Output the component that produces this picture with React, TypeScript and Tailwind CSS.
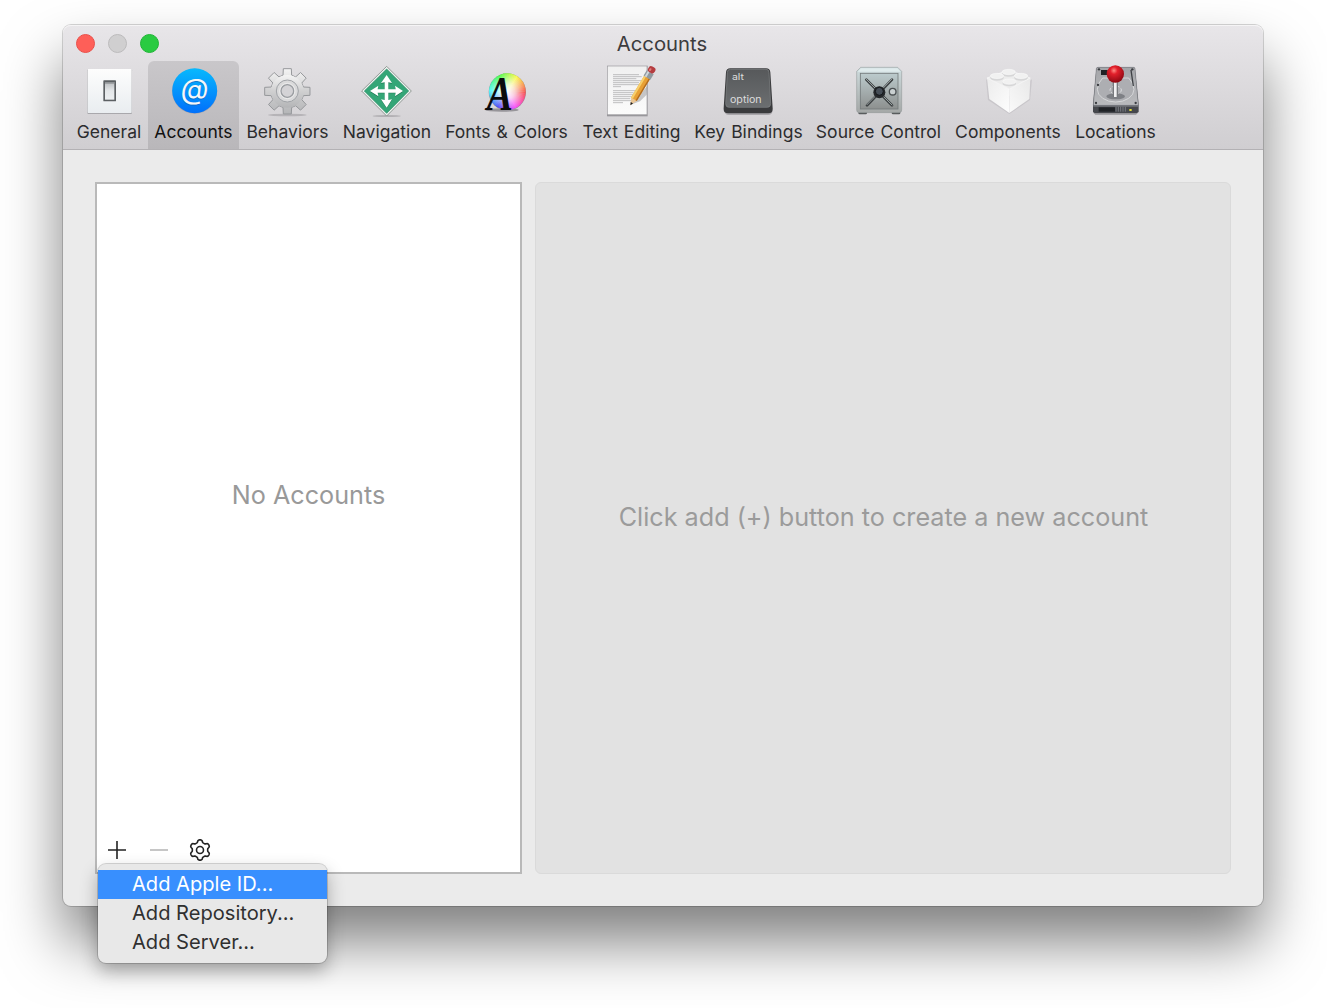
import React from "react";

function polar(cx: number, cy: number, r: number, deg: number) {
  const a = (deg * Math.PI) / 180;
  return `${(cx + r * Math.cos(a)).toFixed(2)} ${(cy + r * Math.sin(a)).toFixed(2)}`;
}

function cog(cx: number, cy: number, teeth: number, rOut: number, rIn: number, tip: number, base: number) {
  const pts: string[] = [];
  for (let i = 0; i < teeth; i++) {
    const c = -90 + (360 / teeth) * i;
    pts.push(polar(cx, cy, rIn, c - base), polar(cx, cy, rOut, c - tip), polar(cx, cy, rOut, c + tip), polar(cx, cy, rIn, c + base));
  }
  return "M" + pts.join("L") + "Z";
}

function softCog(cx: number, cy: number, teeth: number, mid: number, swing: number) {
  const pts: string[] = [];
  for (let d = 0; d < 360; d += 3) {
    const wave = Math.cos(((d + 90) * teeth * Math.PI) / 180);
    pts.push(polar(cx, cy, mid + swing * Math.tanh(1.8 * wave), d));
  }
  return "M" + pts.join("L") + "Z";
}

const ICON = "h-14 w-14 shrink-0 overflow-visible";

function GeneralIcon() {
  return (
    <svg viewBox="75 138 168 168" className={ICON}>
      <defs>
        <linearGradient id="plate" x1="0" y1="0" x2="0" y2="1">
          <stop offset="0" stopColor="#fdfdfd" />
          <stop offset="1" stopColor="#e9edf0" />
        </linearGradient>
        <linearGradient id="rocker" x1="0" y1="0" x2="0" y2="1">
          <stop offset="0" stopColor="#b9bcbf" />
          <stop offset=".5" stopColor="#e4e7e9" />
          <stop offset="1" stopColor="#eceff1" />
        </linearGradient>
      </defs>
      <rect x="94" y="160" width="134" height="134" rx="3" fill="#a9a8ac" />
      <rect x="95" y="159" width="132" height="132" rx="2" fill="url(#plate)" />
      <rect x="142" y="193" width="38" height="63" rx="2" fill="#5c6063" />
      <rect x="147" y="198" width="28" height="53" fill="url(#rocker)" />
      <rect x="147" y="198" width="28" height="5" fill="#8f9396" />
    </svg>
  );
}

function AccountsIcon() {
  return (
    <svg viewBox="330 138 168 168" className={ICON}>
      <defs>
        <linearGradient id="atBlue" x1="0" y1="0" x2="0" y2="1">
          <stop offset="0" stopColor="#08b9fd" />
          <stop offset="1" stopColor="#0070fb" />
        </linearGradient>
      </defs>
      <circle cx="416" cy="226" r="67.5" fill="#8e8c92" opacity=".5" />
      <circle cx="416" cy="224" r="67.5" fill="url(#atBlue)" />
      <g transform="translate(416 249) skewX(-7)" textAnchor="middle" fontFamily="Inter, sans-serif" fontSize="86">
        <text x="-3" y="2" fill="#1b5fae" opacity=".6">@</text>
        <text x="-3" y="0" fill="#f7f7f7">@</text>
      </g>
    </svg>
  );
}

function BehaviorsIcon() {
  return (
    <svg viewBox="60 18 168 168" className={ICON}>
      <defs>
        <linearGradient id="steel" x1="0" y1="0" x2="0" y2="1">
          <stop offset="0" stopColor="#f4f4f4" />
          <stop offset=".5" stopColor="#cfcfd0" />
          <stop offset="1" stopColor="#b4b5b7" />
        </linearGradient>
      </defs>
      <ellipse cx="142" cy="177" rx="58" ry="4" fill="#8d8b90" opacity=".45" />
      <path d={cog(142, 106, 8, 69, 50, 10, 15)} fill="url(#steel)" stroke="#96989b" strokeWidth="3" strokeLinejoin="round" />
      <circle cx="142" cy="106" r="49" fill="url(#steel)" />
      <circle cx="142" cy="105" r="33" fill="#dadadb" stroke="#a0a3a7" strokeWidth="3" />
      <circle cx="142" cy="105" r="19" fill="#d4d3d6" stroke="#9a9da1" strokeWidth="4" />
      <circle cx="142" cy="105" r="23" fill="none" stroke="#eeeeee" strokeWidth="2.5" />
    </svg>
  );
}

function NavigationIcon() {
  const arrow = "M440 57L456 81L445 79V100L467 100L465 89L489 105L465 121L467 110L445 110V132L456 130L440 155L423 130L434 132V110L413 110L415 121L390 105L415 89L413 100L434 100V79L423 81Z";
  return (
    <svg viewBox="357 18 168 168" className={ICON}>
      <ellipse cx="440" cy="180" rx="42" ry="3" fill="#8d8b90" opacity=".5" />
      <path d="M440 31L514 105L440 180L365 105Z" fill="#eef2f0" stroke="#7f8883" strokeWidth="2.5" strokeLinejoin="round" />
      <path d="M440 39L506 105L440 172L373 105Z" fill="#34a677" stroke="#2b8a64" strokeWidth="2" strokeLinejoin="round" />
      <path d={arrow} transform="translate(0 2)" fill="#1d7350" />
      <path d={arrow} fill="#fff" />
    </svg>
  );
}

function FontsIcon() {
  return (
    <svg viewBox="117 18 168 168" className={ICON}>
      <defs>
        <radialGradient id="hueFade">
          <stop offset="0" stopColor="#fff" />
          <stop offset=".4" stopColor="#fff" stopOpacity=".75" />
          <stop offset="1" stopColor="#fff" stopOpacity=".12" />
        </radialGradient>
        <clipPath id="wheelClip">
          <circle cx="202" cy="107" r="55" />
        </clipPath>
      </defs>
      <ellipse cx="186" cy="162" rx="50" ry="5" fill="#55535a" opacity=".5" />
      <circle cx="202" cy="108" r="56" fill="#9c9aa0" />
      <g clipPath="url(#wheelClip)">
        {Array.from({ length: 60 }, (_, i) => (
          <path
            key={i}
            d={`M202 107L${polar(202, 107, 62, i * 6 - 0.6)}L${polar(202, 107, 62, i * 6 + 6.6)}Z`}
            fill={`hsl(${(360 - i * 6) % 360} 95% 58%)`}
          />
        ))}
        <circle cx="202" cy="107" r="56" fill="url(#hueFade)" />
      </g>
      <text transform="translate(179 163) scale(.82 1)" textAnchor="middle" fontFamily="'Liberation Serif', serif" fontStyle="italic" fontWeight="700" fontSize="143" fill="#0b0b0d">A</text>
    </svg>
  );
}

function TextEditingIcon() {
  return (
    <svg viewBox="492 18 168 168" className={ICON}>
      <defs>
        <linearGradient id="paper" x1="0" y1="0" x2="0" y2="1">
          <stop offset="0" stopColor="#f0f0f0" />
          <stop offset="1" stopColor="#fbfbfb" />
        </linearGradient>
      </defs>
      <rect x="501" y="29" width="122" height="152" fill="#98979b" />
      <rect x="503" y="31" width="117" height="144" fill="url(#paper)" />
      <path d="M519 56h78M519 62h86M519 68h70M519 74h84M519 80h78M519 86h80M519 92h24M519 104h72M519 110h62M519 116h66M519 122h56M519 128h52M519 134h54M519 140h30" stroke="#b3b3b4" strokeWidth="2.5" />
      <path d="M572 146L622 90L620 116L600 136Z" fill="#8a8a8c" opacity=".45" />
      <g transform="translate(571 148) rotate(-59)">
        <path d="M0 0L22 -10V10Z" fill="#e9c595" />
        <path d="M0 0L9 -4V4Z" fill="#1c1c1e" />
        <rect x="21" y="-10" width="78" height="20" fill="#e8a034" />
        <rect x="21" y="-10" width="78" height="6" fill="#f6cf6c" />
        <rect x="21" y="6" width="78" height="4" fill="#b06b20" />
        <rect x="97" y="-12" width="19" height="24" fill="#8f999f" />
        <rect x="97" y="-8" width="19" height="6" fill="#cfd6da" />
        <rect x="115" y="-11" width="19" height="22" rx="8" fill="#b53d40" />
        <rect x="118" y="-7" width="9" height="6" rx="3" fill="#df7f7e" />
      </g>
    </svg>
  );
}

function KeyIcon() {
  return (
    <svg viewBox="98 17 168 168" className={ICON}>
      <defs>
        <linearGradient id="keycap" x1="0" y1="0" x2="0" y2="1">
          <stop offset="0" stopColor="#57595b" />
          <stop offset="1" stopColor="#6b6e70" />
        </linearGradient>
      </defs>
      <path d="M109 164Q109 176 122 176H238Q252 176 252 164Z" fill="#8b898e" opacity=".6" />
      <path d="M113 48Q114 36 126 36H233Q245 36 246 48L253 156Q254 171 240 171H119Q105 171 106 156Z" fill="#3a3b3d" />
      <path d="M117 48Q117 39 126 39H233Q242 39 242 48L247 142Q247 153 237 153H122Q112 153 112 142Z" fill="url(#keycap)" stroke="#808385" strokeWidth="2" />
      <text x="131" y="70" textLength="36" lengthAdjust="spacingAndGlyphs" fontFamily="Inter, sans-serif" fontSize="27" fill="#dcdcdc">alt</text>
      <text x="125" y="140" textLength="95" lengthAdjust="spacingAndGlyphs" fontFamily="Inter, sans-serif" fontSize="28" fill="#dcdcdc">option</text>
    </svg>
  );
}

function SafeIcon() {
  return (
    <svg viewBox="489 18 168 168" className={ICON}>
      <defs>
        <linearGradient id="safe" x1="0" y1="0" x2="0" y2="1">
          <stop offset="0" stopColor="#cfdddf" />
          <stop offset="1" stopColor="#a5a8a7" />
        </linearGradient>
        <linearGradient id="safeDoor" x1="0" y1="0" x2="0" y2="1">
          <stop offset="0" stopColor="#bccbcd" />
          <stop offset="1" stopColor="#8d908f" />
        </linearGradient>
      </defs>
      <rect x="511" y="166" width="26" height="9" rx="4" fill="#55585a" />
      <rect x="611" y="166" width="26" height="9" rx="4" fill="#55585a" />
      <path d="M506 46L518 34H629L641 46V162Q641 170 633 170H514Q506 170 506 162Z" fill="url(#safe)" stroke="#8b9393" strokeWidth="1.5" />
      <path d="M509 47L519 37H628L638 47Z" fill="#dfebec" />
      <rect x="517" y="52" width="113" height="107" fill="url(#safeDoor)" stroke="#747b7c" strokeWidth="2.5" />
      <path d="M535 71L612 148M612 71L537 148" stroke="#3c4042" strokeWidth="8" strokeLinecap="round" />
      <path d="M534 69L612 147M611 70L537 146" stroke="#aab3b5" strokeWidth="2.5" strokeLinecap="round" />
      <circle cx="574" cy="109" r="18" fill="#25282b" />
      <circle cx="574" cy="106" r="12" fill="#454d56" stroke="#14171a" strokeWidth="3" />
      <circle cx="614" cy="107" r="10" fill="#c9d0d1" stroke="#4b5052" strokeWidth="4" />
    </svg>
  );
}

function ComponentsIcon() {
  return (
    <svg viewBox="120 18 168 168" className={ICON}>
      <defs>
        <linearGradient id="brickL" x1="0" y1="0" x2="1" y2="1">
          <stop offset="0" stopColor="#ececec" />
          <stop offset="1" stopColor="#fdfdfd" />
        </linearGradient>
        <linearGradient id="brickR" x1="1" y1="0" x2="0" y2="1">
          <stop offset="0" stopColor="#e8e8e8" />
          <stop offset="1" stopColor="#fafafa" />
        </linearGradient>
      </defs>
      <path d="M138 70L208 120L276 70L270 132L208 174L144 132Z" fill="#a9a7ac" opacity=".35" />
      <path d="M141 66L208 99V171L148 129Z" fill="url(#brickL)" />
      <path d="M271 66L208 99V171L268 129Z" fill="url(#brickR)" />
      <path d="M141 66L200 44H212L271 66L208 99Z" fill="#ececec" stroke="#fafafa" strokeWidth="2" />
      {[[206, 51], [171, 63], [243, 63], [208, 80]].map(([x, y]) => (
        <g key={`${x}-${y}`}>
          <path d={`M${x - 20} ${y - 4}V${y + 3}A20 8 0 0 0 ${x + 20} ${y + 3}V${y - 4}Z`} fill="#d6d6d7" />
          <ellipse cx={x} cy={y - 3} rx="20" ry="8" fill="#f1f1f1" stroke="#fcfcfc" strokeWidth="1.5" />
        </g>
      ))}
    </svg>
  );
}

function LocationsIcon() {
  return (
    <svg viewBox="444 18 168 168" className={ICON}>
      <defs>
        <linearGradient id="disk" x1="0" y1="0" x2="0" y2="1">
          <stop offset="0" stopColor="#a4a5a9" />
          <stop offset="1" stopColor="#b9babd" />
        </linearGradient>
        <radialGradient id="ball" cx=".42" cy=".3" r=".7">
          <stop offset="0" stopColor="#ff8d85" />
          <stop offset=".3" stopColor="#e3202b" />
          <stop offset="1" stopColor="#8d0812" />
        </radialGradient>
      </defs>
      <path d="M460 170H594L588 176H466Z" fill="#6d6b70" opacity=".6" />
      <path d="M474 34H580Q584 34 585 38L596 146V166Q596 171 590 171H464Q459 171 459 166V146L469 38Q470 34 474 34Z" fill="#45474c" />
      <path d="M474 34H580Q584 34 585 38L595 148H460L469 38Q470 34 474 34Z" fill="url(#disk)" stroke="#797b80" strokeWidth="1.5" />
      <path d="M472 100A55 38 0 0 0 582 100Q580 80 566 66H488Q474 80 472 100Z" fill="#adaeb2" stroke="#dddee0" strokeWidth="2.5" />
      <path d="M573 42L580 90" stroke="#3e4045" strokeWidth="4" />
      <rect x="483" y="42" width="20" height="15" fill="#202225" />
      <ellipse cx="527" cy="121" rx="28" ry="9" fill="#505257" opacity=".5" />
      <ellipse cx="527" cy="102" rx="17" ry="12" fill="none" stroke="#dcdde0" strokeWidth="3" strokeDasharray="9 5" />
      {[[477, 40], [577, 40], [468, 141], [587, 141], [474, 87]].map(([x, y]) => (
        <circle key={`${x}-${y}`} cx={x} cy={y} r="3.5" fill="#3a3c40" />
      ))}
      <rect x="460" y="149" width="135" height="2.5" fill="#898b90" />
      <rect x="476" y="154" width="50" height="13" fill="#202226" />
      <path d="M528 152v15M535 152v15M542 152v15M549 152v15M556 152v15" stroke="#777a80" strokeWidth="3" />
      <rect x="568" y="159" width="7" height="6" fill="#e3dd35" />
      <rect x="518" y="76" width="16" height="48" rx="5" fill="#77797d" />
      <rect x="522" y="76" width="8" height="47" fill="#f1f1f2" />
      <circle cx="526" cy="54" r="26" fill="url(#ball)" />
    </svg>
  );
}

const TABS = [
  { label: "General", width: "w-[78px]", icon: <GeneralIcon /> },
  { label: "Accounts", width: "w-[91px]", icon: <AccountsIcon />, selected: true },
  { label: "Behaviors", width: "w-[97px]", icon: <BehaviorsIcon /> },
  { label: "Navigation", width: "w-[102px]", icon: <NavigationIcon /> },
  { label: "Fonts & Colors", width: "w-[137px]", icon: <FontsIcon /> },
  { label: "Text Editing", width: "w-[113px]", icon: <TextEditingIcon /> },
  { label: "Key Bindings", width: "w-[121px]", icon: <KeyIcon /> },
  { label: "Source Control", width: "w-[139px]", icon: <SafeIcon /> },
  { label: "Components", width: "w-[120px]", icon: <ComponentsIcon /> },
  { label: "Locations", width: "w-[95px]", icon: <LocationsIcon /> },
];

function Toolbar() {
  return (
    <nav className="flex h-[88px] pl-[7px]">
      {TABS.map((tab) => (
        <button
          key={tab.label}
          className={`flex h-[88px] shrink-0 flex-col items-center rounded-t-md pt-px ${tab.width} ${
            tab.selected ? "bg-linear-to-b from-[#c9c7ca] to-[#b9b7ba] text-[#111]" : "text-[#2c2c2e]"
          }`}
        >
          {tab.icon}
          <span className="mt-[3px] text-[17.5px] leading-[21px] tracking-[0.03px] whitespace-nowrap [word-spacing:1px]">{tab.label}</span>
        </button>
      ))}
    </nav>
  );
}

function AddMenu() {
  return (
    <div className="absolute top-[680px] left-px z-10 h-[99px] w-[229px] rounded-lg bg-[#e8e8e8] pt-[6px] text-[20.1px] text-[#303030] shadow-[0_0_0_1px_rgba(0,0,0,0.16),0_8px_18px_rgba(0,0,0,0.3)]">
      <div className="h-[29px] bg-[#388ffe] pl-[34px] leading-[28px] text-white">Add Apple ID...</div>
      <div className="h-[29px] pl-[34px] leading-[28px]">Add Repository...</div>
      <div className="h-[29px] pl-[34px] leading-[28px]">Add Server...</div>
    </div>
  );
}

export default function App() {
  return (
    <div className="h-[1008px] w-[1327px] overflow-hidden bg-white pt-[25px] pl-[63px] font-['Inter',sans-serif]">
      <main className="flex h-[881px] w-[1200px] flex-col rounded-lg bg-[#ebebeb] shadow-[0_0_0_1px_rgba(0,0,0,0.16),0_36px_60px_rgba(0,0,0,0.5)]">
        <header className="h-[125px] shrink-0 rounded-t-lg border-b border-[#b3b1b4] bg-linear-to-b from-[#e8e6e9] to-[#d0ced1] shadow-[inset_0_1px_0_#f5f4f5]">
          <div className="flex h-9 items-center pl-[13px]">
            <div className="flex w-[84px] gap-[13px]">
              <span className="h-[19px] w-[19px] rounded-full border border-[#e9504a] bg-[#fe5f58]" />
              <span className="h-[19px] w-[19px] rounded-full border border-[#bcbbbc] bg-[#d0cfd0]" />
              <span className="h-[19px] w-[19px] rounded-full border border-[#20b536] bg-[#29cb41]" />
            </div>
            <h1 className="flex-1 pt-[2px] pr-[99px] text-center text-[20.3px] leading-none text-[#3c3c3e]">Accounts</h1>
          </div>
          <Toolbar />
        </header>
        <div className="flex flex-1 gap-[13px] pt-8 pr-8 pb-8 pl-8">
          <section className="relative flex w-[427px] flex-col border-2 border-[#b9b9b9] bg-white">
            <div className="flex flex-1 items-center justify-center pb-5 text-[25.2px] text-[#999]">No Accounts</div>
            <div className="flex h-[44px] items-center pl-[9px]">
              <svg viewBox="0 0 110 24" className="h-6 w-[110px]">
                <path d="M2 12h18M11 3v18" stroke="#222" strokeWidth="1.6" />
                <path d="M44 12h18" stroke="#b8b8b8" strokeWidth="1.6" />
                <path d={softCog(94, 12, 6, 8.9, 1.3)} fill="none" stroke="#222" strokeWidth="1.6" strokeLinejoin="round" />
                <circle cx="94" cy="12" r="3.5" fill="none" stroke="#222" strokeWidth="1.6" />
              </svg>
            </div>
            <AddMenu />
          </section>
          <section className="flex flex-1 items-center justify-center rounded-md border border-[#dadada] bg-[#e2e2e2] pb-[21px] pl-px text-[25.2px] text-[#9b9b9b]">
            Click add (+) button to create a new account
          </section>
        </div>
      </main>
    </div>
  );
}
